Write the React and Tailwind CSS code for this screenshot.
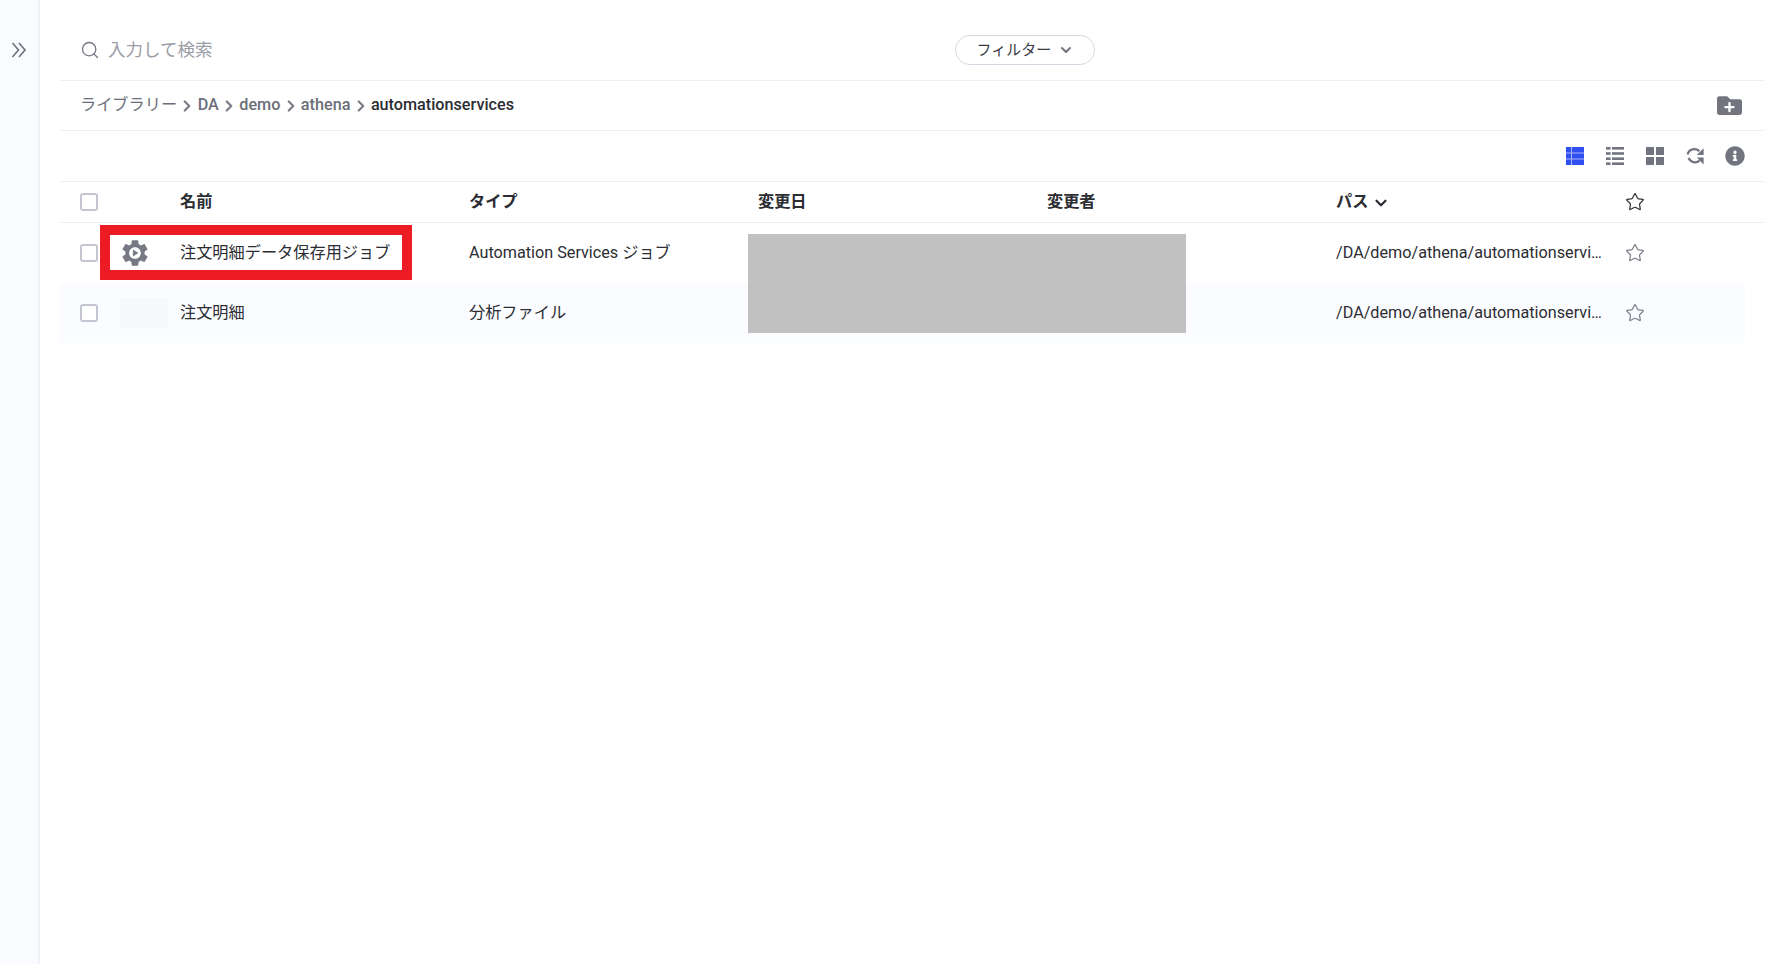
import React from "react";
import { Search, Star, ChevronDown, ChevronRight } from "lucide-react";
import { FaFolderPlus, FaInfoCircle } from "react-icons/fa";

const font = "font-['Roboto','Noto_Sans_CJK_JP',sans-serif]";
const columns = "grid grid-cols-[120px_289px_289px_289px_289px_289px_1fr] items-center";

const Checkbox = () => (
  <span className="block w-[18px] h-[18px] rounded-[3px] border-2 border-[#c3c6d0] bg-white" />
);

const JobIcon = () => (
  <svg width="32" height="32" viewBox="0 0 24 24" fill="#777a84">
    <path
      fillRule="evenodd"
      d="M19.14 12.94c.04-.3.06-.61.06-.94 0-.32-.02-.64-.07-.94l2.03-1.58c.18-.14.23-.41.12-.61l-1.92-3.32c-.12-.22-.37-.29-.59-.22l-2.39.96c-.5-.38-1.03-.7-1.62-.94l-.36-2.54c-.04-.24-.24-.41-.48-.41h-3.84c-.24 0-.43.17-.47.41l-.36 2.54c-.59.24-1.13.57-1.62.94l-2.39-.96c-.22-.08-.47 0-.59.22L2.74 8.87c-.12.21-.08.47.12.61l2.03 1.58c-.05.3-.09.63-.09.94s.02.64.07.94l-2.03 1.58c-.18.14-.23.41-.12.61l1.92 3.32c.12.22.37.29.59.22l2.39-.96c.5.38 1.03.7 1.62.94l.36 2.54c.05.24.24.41.48.41h3.84c.24 0 .44-.17.47-.41l.36-2.54c.59-.24 1.13-.56 1.62-.94l2.39.96c.22.08.47 0 .59-.22l1.92-3.32c.12-.22.07-.47-.12-.61l-2.01-1.58zM12 16.4c-2.43 0-4.4-1.97-4.4-4.4s1.97-4.4 4.4-4.4 4.4 1.97 4.4 4.4-1.97 4.4-4.4 4.4z"
    />
    <path d="M10.4 9.4v5.2l4.2-2.6z" />
  </svg>
);

const TableIcon = () => (
  <svg width="18" height="18" viewBox="0 0 18 18">
    <rect width="18" height="18" fill="#2f4ff0" />
    <rect x="5" y="0" width="1" height="18" fill="#a9b6f8" />
    <rect x="0" y="5.5" width="18" height="1" fill="#a9b6f8" />
    <rect x="0" y="11.5" width="18" height="1" fill="#a9b6f8" />
  </svg>
);

const ListIcon = () => (
  <svg width="18" height="18" viewBox="0 0 18 18" fill="#72757f">
    <rect x="0" y="0" width="4.6" height="2.6" />
    <rect x="6" y="0" width="12" height="2.6" />
    <rect x="0" y="5.2" width="4.6" height="2.6" />
    <rect x="6" y="5.2" width="12" height="2.6" />
    <rect x="0" y="10.4" width="4.6" height="2.6" />
    <rect x="6" y="10.4" width="12" height="2.6" />
    <rect x="0" y="15.4" width="4.6" height="2.6" />
    <rect x="6" y="15.4" width="12" height="2.6" />
  </svg>
);

const GridIcon = () => (
  <svg width="18" height="18" viewBox="0 0 18 18" fill="#72757f">
    <rect x="0" y="0" width="8" height="8" />
    <rect x="10" y="0" width="8" height="8" />
    <rect x="0" y="10" width="8" height="8" />
    <rect x="10" y="10" width="8" height="8" />
  </svg>
);

const SyncIcon = () => (
  <svg width="18" height="18" viewBox="0 0 18 18" fill="#72757f">
    <path d="M1.6 7.4A7 7 0 0 1 13.4 4.2" fill="none" stroke="#72757f" strokeWidth="2.2" />
    <path d="M17.6 1.2V8H10.8z" />
    <path d="M2.6 11A7 7 0 0 0 13.6 13.6" fill="none" stroke="#72757f" strokeWidth="2.2" />
    <path d="M17.6 17.4V10.4H10.8z" />
  </svg>
);

const SidebarToggle = () => (
  <svg width="16" height="16" viewBox="0 0 16 16" fill="none" stroke="#72757f" strokeWidth="1.7">
    <path d="M1.5 1l6 7-6 7" />
    <path d="M8 1l6 7-6 7" />
  </svg>
);

const ToolButton = ({ children }) => (
  <span className="w-10 h-5 flex items-center justify-center">{children}</span>
);

const Crumb = ({ children }) => (
  <>
    <span className="font-medium text-[#6b6e78]">{children}</span>
    <ChevronRight size={18} strokeWidth={3} className="text-[#7b7e88] mx-[1.25px]" />
  </>
);

const Row = ({ striped, icon, name, type }) => (
  <div className={`${columns} h-[60px] mr-5 text-[#2b2d33] ${striped ? "bg-[#fbfcff]" : ""}`}>
    <div className="flex items-center pl-5">
      <Checkbox />
      <div className="w-[48px] ml-[22px] flex items-center justify-start">{icon}</div>
    </div>
    <div>{name}</div>
    <div>{type}</div>
    <div />
    <div />
    <div className="min-w-0">
      <span className="block truncate w-[268px]">/DA/demo/athena/automationservices/</span>
    </div>
    <div>
      <Star size={20} strokeWidth={1.5} className="text-[#7d808a]" />
    </div>
  </div>
);

export default function App() {
  return (
    <div className={`${font} relative flex w-full h-[964px] bg-white text-[16.2px] overflow-hidden`}>
      <aside className="w-10 shrink-0 bg-[#fafbff] border-r-2 border-[#f0f1f8] pt-[42px] pl-[11px]">
        <SidebarToggle />
      </aside>

      <main className="flex-1 ml-5 mr-5 flex flex-col">
        <div className="h-[81px] shrink-0 border-b border-[#eef0f6] flex items-center pl-5 pt-[20px]">
          <Search size={20} strokeWidth={1.6} className="text-[#72757f]" />
          <span className="ml-[8px] text-[17.5px] text-[#9a9da6]">入力して検索</span>
          <button className="ml-[743px] w-[140px] h-[30px] rounded-full border border-[#d6d9e4] flex items-center pl-[20px] text-[15px] text-[#3a3c44]">
            フィルター
            <ChevronDown size={16} strokeWidth={3} className="ml-[7px] text-[#72757f]" />
          </button>
        </div>

        <div className="h-[50px] shrink-0 border-b border-[#eef0f6] flex items-center pl-5 pr-[23px]">
          <Crumb>
            <span className="font-normal">ライブラリー</span>
          </Crumb>
          <Crumb>DA</Crumb>
          <Crumb>demo</Crumb>
          <Crumb>athena</Crumb>
          <span className="font-medium text-[#2b2d33]">automationservices</span>
          <FaFolderPlus size={25} className="ml-auto text-[#72757f]" />
        </div>

        <div className="h-[51px] shrink-0 border-b border-[#eef0f6] flex items-center justify-end pr-[10px]">
          <ToolButton><TableIcon /></ToolButton>
          <ToolButton><ListIcon /></ToolButton>
          <ToolButton><GridIcon /></ToolButton>
          <ToolButton><SyncIcon /></ToolButton>
          <ToolButton><FaInfoCircle size={20} className="text-[#72757f]" /></ToolButton>
        </div>

        <div className={`${columns} h-[41px] shrink-0 border-b border-[#eef0f6] font-bold text-[#2b2d33]`}>
          <div className="pl-5">
            <Checkbox />
          </div>
          <div>名前</div>
          <div>タイプ</div>
          <div>変更日</div>
          <div>変更者</div>
          <div className="flex items-center gap-[4px]">
            パス
            <ChevronDown size={18} strokeWidth={3} className="mt-[2px]" />
          </div>
          <div>
            <Star size={20} strokeWidth={1.5} className="text-[#33353b]" />
          </div>
        </div>

        <Row icon={<div className="-ml-[1px]"><JobIcon /></div>} name="注文明細データ保存用ジョブ" type="Automation Services ジョブ" />
        <Row
          striped
          icon={<div className="w-[48px] h-[30px] bg-[#f8f9fd]" />}
          name="注文明細"
          type="分析ファイル"
        />
      </main>

      {/* redaction + callout drawn over the table */}
      <div className="absolute left-[748px] top-[234px] w-[438px] h-[99px] bg-[#c1c1c1]" />
      <div className="absolute left-[100px] top-[225px] w-[312px] h-[55px] border-[10px] border-[#ed1c24]" />
    </div>
  );
}
